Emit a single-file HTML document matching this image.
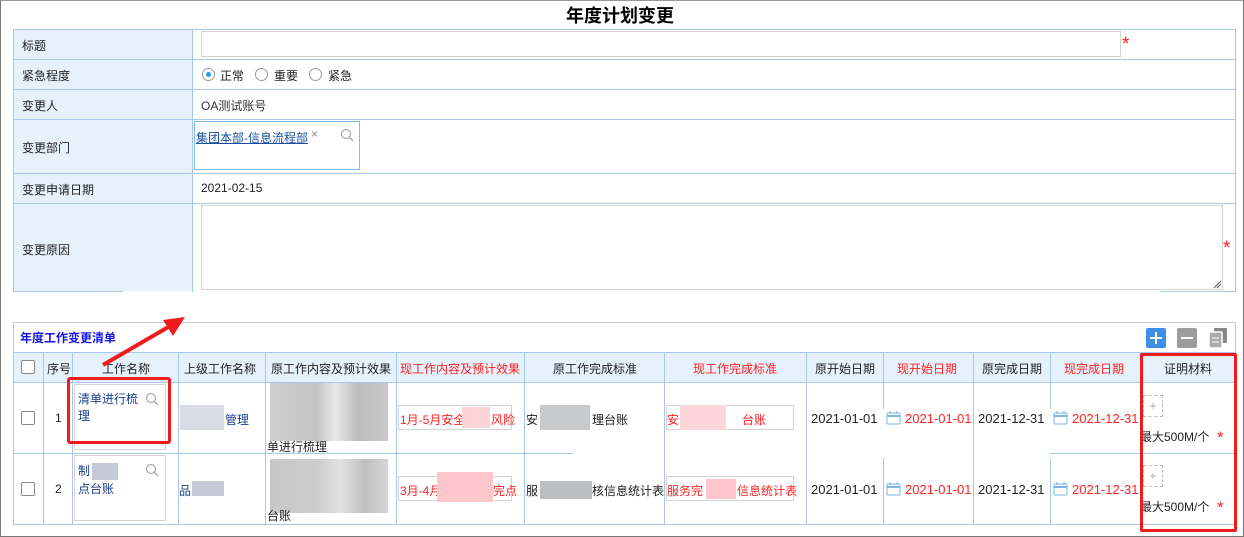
<!DOCTYPE html>
<html><head><meta charset="utf-8"><style>
*{margin:0;padding:0;box-sizing:border-box}
body{width:1244px;height:537px;position:relative;overflow:hidden;background:#fff;font-family:"Liberation Sans","Noto Sans CJK SC",sans-serif;font-size:12px;color:#222}
.a{position:absolute}
.lab{background:#e5f2fc}
.t{position:absolute;white-space:nowrap}
.red{color:#f22}
.hl{position:absolute;height:1px;background:#a9c6ee}
.vl{position:absolute;width:1px;background:#a9c6ee}
.inp{position:absolute;border:1px solid #d3d3d3;background:#fff}
.blk{position:absolute}
</style></head><body>
<div class="a" style="left:0;top:0;width:1244px;height:537px;border:1px solid #777;border-top:1px solid #999"></div>
<div class="t" style="left:566px;top:2px;font-size:18px;font-weight:bold;color:#000">年度计划变更</div>

<div class="a lab" style="left:13px;top:29px;width:180px;height:262px"></div>
<div class="hl" style="left:13px;top:29px;width:1223px"></div>
<div class="hl" style="left:13px;top:59px;width:1223px"></div>
<div class="hl" style="left:13px;top:89px;width:1223px"></div>
<div class="hl" style="left:13px;top:119px;width:1223px"></div>
<div class="hl" style="left:13px;top:173px;width:1223px"></div>
<div class="hl" style="left:13px;top:203px;width:1223px"></div>
<div class="hl" style="left:13px;top:291px;width:110px"></div>
<div class="hl" style="left:1160px;top:291px;width:76px"></div>
<div class="vl" style="left:13px;top:29px;height:263px"></div>
<div class="vl" style="left:192px;top:29px;height:263px"></div>
<div class="vl" style="left:1235px;top:29px;height:263px"></div>
<div class="t" style="left:22px;top:37px">标题</div>
<div class="t" style="left:22px;top:67px">紧急程度</div>
<div class="t" style="left:22px;top:97px">变更人</div>
<div class="t" style="left:22px;top:139px">变更部门</div>
<div class="t" style="left:22px;top:181px">变更申请日期</div>
<div class="t" style="left:22px;top:241px">变更原因</div>
<div class="inp" style="left:201px;top:31px;width:920px;height:26px"></div>
<div class="t red" style="left:1122px;top:34px;font-size:19px">*</div>
<div class="a" style="left:202px;top:68px;width:13px;height:13px;border:1px solid #999;border-radius:50%"><div class="a" style="left:3px;top:3px;width:5px;height:5px;border-radius:50%;background:#2a9be8"></div></div>
<div class="t" style="left:220px;top:67px">正常</div>
<div class="a" style="left:255px;top:68px;width:13px;height:13px;border:1px solid #999;border-radius:50%"></div>
<div class="t" style="left:274px;top:67px">重要</div>
<div class="a" style="left:309px;top:68px;width:13px;height:13px;border:1px solid #999;border-radius:50%"></div>
<div class="t" style="left:328px;top:67px">紧急</div>
<div class="t" style="left:201px;top:97px;color:#333">OA测试账号</div>
<div class="a" style="left:194px;top:121px;width:166px;height:49px;border:1px solid #7cbde8"></div>
<div class="t" style="left:196px;top:129px;color:#1a4fa0;text-decoration:underline">集团本部-信息流程部</div>
<div class="t" style="left:311px;top:127px;color:#888">×</div>
<svg class="a" style="left:340px;top:128px" width="14" height="14"><circle cx="6" cy="6" r="4.5" fill="none" stroke="#aaa" stroke-width="1.2"/><line x1="9.5" y1="9.5" x2="13" y2="13" stroke="#aaa" stroke-width="1.3"/></svg>
<div class="t" style="left:201px;top:181px">2021-02-15</div>
<div class="inp" style="left:201px;top:205px;width:1022px;height:85px"></div>
<svg class="a" style="left:1212px;top:279px" width="10" height="10"><line x1="2" y1="9" x2="9" y2="2" stroke="#555"/><line x1="5" y1="9" x2="9" y2="5" stroke="#555"/></svg>
<div class="t red" style="left:1223px;top:238px;font-size:19px">*</div>

<div class="a" style="left:13px;top:322px;width:1223px;height:203px;border:1px solid #ccc"></div>
<div class="t" style="left:20px;top:329px;color:#1515e6;font-weight:bold;font-size:12px">年度工作变更清单</div>
<div class="a" style="left:1146px;top:328px;width:20px;height:20px;background:#3f8ee8;border-radius:2px"><div class="a" style="left:4px;top:9px;width:12px;height:2px;background:#fff"></div><div class="a" style="left:9px;top:4px;width:2px;height:12px;background:#fff"></div></div>
<div class="a" style="left:1177px;top:328px;width:20px;height:20px;background:#9c9c9c;border-radius:2px"><div class="a" style="left:4px;top:9px;width:12px;height:2px;background:#fff"></div></div>
<svg class="a" style="left:1208px;top:327px" width="21" height="22"><rect x="6" y="1" width="13" height="15" fill="#888" rx="1"/><rect x="1" y="5" width="13" height="16" fill="#aaa" stroke="#fff" stroke-width="1.5" rx="1"/><line x1="4" y1="11" x2="11" y2="11" stroke="#fff"/><line x1="4" y1="15" x2="11" y2="15" stroke="#fff"/></svg>

<div class="a lab" style="left:13px;top:352px;width:1223px;height:30px"></div>
<div class="hl" style="left:13px;top:352px;width:1223px"></div>
<div class="hl" style="left:13px;top:382px;width:1223px"></div>
<div class="hl" style="left:13px;top:453px;width:560px"></div>
<div class="hl" style="left:1050px;top:453px;width:186px"></div>
<div class="hl" style="left:13px;top:524px;width:1223px"></div>
<div class="vl" style="left:13px;top:352px;height:172px"></div>
<div class="vl" style="left:43px;top:352px;height:172px"></div>
<div class="vl" style="left:72px;top:352px;height:172px"></div>
<div class="vl" style="left:178px;top:352px;height:172px"></div>
<div class="vl" style="left:265px;top:352px;height:172px"></div>
<div class="vl" style="left:396px;top:352px;height:172px"></div>
<div class="vl" style="left:524px;top:352px;height:172px"></div>
<div class="vl" style="left:664px;top:352px;height:172px"></div>
<div class="vl" style="left:806px;top:352px;height:172px"></div>
<div class="vl" style="left:883px;top:352px;height:57px"></div><div class="vl" style="left:883px;top:458px;height:66px"></div>
<div class="vl" style="left:973px;top:352px;height:172px"></div>
<div class="vl" style="left:1050px;top:352px;height:57px"></div><div class="vl" style="left:1050px;top:458px;height:66px"></div>
<div class="vl" style="left:1140px;top:352px;height:172px"></div>
<div class="vl" style="left:1235px;top:352px;height:172px"></div>

<div class="a" style="left:21px;top:360px;width:14px;height:14px;border:1px solid #888;border-radius:2px;background:#fff"></div>
<div class="t" style="left:47px;top:360px">序号</div>
<div class="t" style="left:102px;top:360px">工作名称</div>
<div class="t" style="left:184px;top:360px">上级工作名称</div>
<div class="t" style="left:271px;top:360px">原工作内容及预计效果</div>
<div class="t red" style="left:400px;top:360px">现工作内容及预计效果</div>
<div class="t" style="left:553px;top:360px">原工作完成标准</div>
<div class="t red" style="left:693px;top:360px">现工作完成标准</div>
<div class="t" style="left:815px;top:360px">原开始日期</div>
<div class="t red" style="left:897px;top:360px">现开始日期</div>
<div class="t" style="left:982px;top:360px">原完成日期</div>
<div class="t red" style="left:1064px;top:360px">现完成日期</div>
<div class="t" style="left:1164px;top:360px">证明材料</div>

<div class="a" style="left:21px;top:411px;width:14px;height:14px;border:1px solid #888;border-radius:2px"></div>
<div class="t" style="left:55px;top:411px">1</div>
<div class="inp" style="left:74px;top:384px;width:92px;height:66px"></div>
<div class="t" style="left:78px;top:391px;color:#1a3d8a;line-height:17px;white-space:normal;width:60px">清单进行梳理</div>
<svg class="a" style="left:145px;top:392px" width="14" height="14"><circle cx="6" cy="6" r="4.5" fill="none" stroke="#aaa" stroke-width="1.2"/><line x1="9.5" y1="9.5" x2="13" y2="13" stroke="#aaa" stroke-width="1.3"/></svg>
<div class="blk" style="left:180px;top:405px;width:44px;height:25px;background:#d8dbe3"></div>
<div class="t" style="left:225px;top:411px;color:#1a3d8a">管理</div>
<div class="blk" style="left:270px;top:383px;width:118px;height:58px;background:linear-gradient(90deg,#cfcfcf,#c4c4c4 40%,#e8e8e8 55%,#bcbcbc 75%,#c9c9c9)"></div>
<div class="t" style="left:267px;top:438px;font-size:12px">单进行梳理</div>
<div class="inp" style="left:398px;top:405px;width:114px;height:25px"></div>
<div class="t red" style="left:400px;top:411px">1月-5月安全</div>
<div class="blk" style="left:462px;top:407px;width:28px;height:21px;background:#fcd3d6"></div>
<div class="t red" style="left:491px;top:411px">风险</div>
<div class="t" style="left:526px;top:411px">安</div>
<div class="blk" style="left:540px;top:405px;width:50px;height:25px;background:#c8c9cb"></div>
<div class="t" style="left:592px;top:411px">理台账</div>
<div class="inp" style="left:666px;top:405px;width:128px;height:25px"></div>
<div class="t red" style="left:667px;top:411px">安全</div>
<div class="blk" style="left:680px;top:405px;width:46px;height:25px;background:#fcd6da"></div>
<div class="t red" style="left:742px;top:411px">台账</div>
<div class="t" style="left:811px;top:411px;font-size:13px">2021-01-01</div>
<div class="t" style="left:978px;top:411px;font-size:13px">2021-12-31</div>

<div class="a" style="left:21px;top:482px;width:14px;height:14px;border:1px solid #888;border-radius:2px"></div>
<div class="t" style="left:55px;top:482px">2</div>
<div class="inp" style="left:74px;top:455px;width:92px;height:66px"></div>
<div class="t" style="left:78px;top:462px;color:#1a3d8a">制</div>
<div class="blk" style="left:92px;top:463px;width:26px;height:17px;background:#c6cad8"></div>
<div class="t" style="left:78px;top:480px;color:#1a3d8a">点台账</div>
<svg class="a" style="left:145px;top:463px" width="14" height="14"><circle cx="6" cy="6" r="4.5" fill="none" stroke="#aaa" stroke-width="1.2"/><line x1="9.5" y1="9.5" x2="13" y2="13" stroke="#aaa" stroke-width="1.3"/></svg>
<div class="t" style="left:179px;top:482px;color:#1a3d8a">品</div>
<div class="blk" style="left:192px;top:481px;width:32px;height:15px;background:#c6cad8"></div>
<div class="blk" style="left:270px;top:459px;width:118px;height:54px;background:linear-gradient(90deg,#c8c8c8,#cdcdcd 40%,#e1e1e1 60%,#bfbfbf 80%,#d6d6d6)"></div>
<div class="t" style="left:267px;top:507px">台账</div>
<div class="inp" style="left:398px;top:476px;width:114px;height:25px"></div>
<div class="t red" style="left:400px;top:482px">3月-4月</div>
<div class="blk" style="left:437px;top:472px;width:56px;height:30px;background:#fcc6cb"></div>
<div class="t red" style="left:493px;top:482px">完点</div>
<div class="t" style="left:526px;top:482px">服</div>
<div class="blk" style="left:540px;top:481px;width:52px;height:18px;background:#bdbebf"></div>
<div class="t" style="left:592px;top:482px">核信息统计表</div>
<div class="inp" style="left:666px;top:476px;width:128px;height:25px"></div>
<div class="t red" style="left:667px;top:482px">服务完</div>
<div class="blk" style="left:706px;top:479px;width:30px;height:20px;background:#fcc6cb"></div>
<div class="t red" style="left:737px;top:482px">信息统计表</div>
<div class="t" style="left:811px;top:482px;font-size:13px">2021-01-01</div>
<div class="t" style="left:978px;top:482px;font-size:13px">2021-12-31</div>

<svg class="a" style="left:886px;top:410px" width="16" height="16"><rect x="1" y="3" width="13" height="11" rx="1" fill="none" stroke="#7db4e6"/><line x1="1" y1="6" x2="14" y2="6" stroke="#7db4e6" stroke-width="2"/><line x1="4" y1="1" x2="4" y2="4" stroke="#7db4e6"/><line x1="11" y1="1" x2="11" y2="4" stroke="#7db4e6"/></svg>
<div class="t red" style="left:905px;top:411px;font-size:13px">2021-01-01</div>
<svg class="a" style="left:1053px;top:410px" width="16" height="16"><rect x="1" y="3" width="13" height="11" rx="1" fill="none" stroke="#7db4e6"/><line x1="1" y1="6" x2="14" y2="6" stroke="#7db4e6" stroke-width="2"/><line x1="4" y1="1" x2="4" y2="4" stroke="#7db4e6"/><line x1="11" y1="1" x2="11" y2="4" stroke="#7db4e6"/></svg>
<div class="t red" style="left:1072px;top:411px;font-size:13px">2021-12-31</div>
<svg class="a" style="left:886px;top:481px" width="16" height="16"><rect x="1" y="3" width="13" height="11" rx="1" fill="none" stroke="#7db4e6"/><line x1="1" y1="6" x2="14" y2="6" stroke="#7db4e6" stroke-width="2"/><line x1="4" y1="1" x2="4" y2="4" stroke="#7db4e6"/><line x1="11" y1="1" x2="11" y2="4" stroke="#7db4e6"/></svg>
<div class="t red" style="left:905px;top:482px;font-size:13px">2021-01-01</div>
<svg class="a" style="left:1053px;top:481px" width="16" height="16"><rect x="1" y="3" width="13" height="11" rx="1" fill="none" stroke="#7db4e6"/><line x1="1" y1="6" x2="14" y2="6" stroke="#7db4e6" stroke-width="2"/><line x1="4" y1="1" x2="4" y2="4" stroke="#7db4e6"/><line x1="11" y1="1" x2="11" y2="4" stroke="#7db4e6"/></svg>
<div class="t red" style="left:1072px;top:482px;font-size:13px">2021-12-31</div>

<div class="a" style="left:1143px;top:395px;width:20px;height:22px;border:1px dashed #bbb;color:#aaa;text-align:center;line-height:20px">+</div>
<div class="t" style="left:1140px;top:428px">最大500M/个</div>
<div class="t red" style="left:1217px;top:428px;font-size:17px">*</div>
<div class="a" style="left:1143px;top:465px;width:20px;height:22px;border:1px dashed #bbb;color:#aaa;text-align:center;line-height:20px">+</div>
<div class="t" style="left:1140px;top:498px">最大500M/个</div>
<div class="t red" style="left:1217px;top:498px;font-size:17px">*</div>

<div class="a" style="left:1140px;top:353px;width:97px;height:179px;border:3px solid #ee1c1c;border-radius:2px"></div>
<div class="a" style="left:67px;top:377px;width:104px;height:67px;border:3px solid #ee1c1c;border-radius:3px"></div>
<svg class="a" style="left:95px;top:312px" width="95" height="60"><line x1="8" y1="53" x2="75" y2="14" stroke="#ee1c1c" stroke-width="4"/><polygon points="90,5 68,8 78,24" fill="#ee1c1c"/></svg>
</body></html>
